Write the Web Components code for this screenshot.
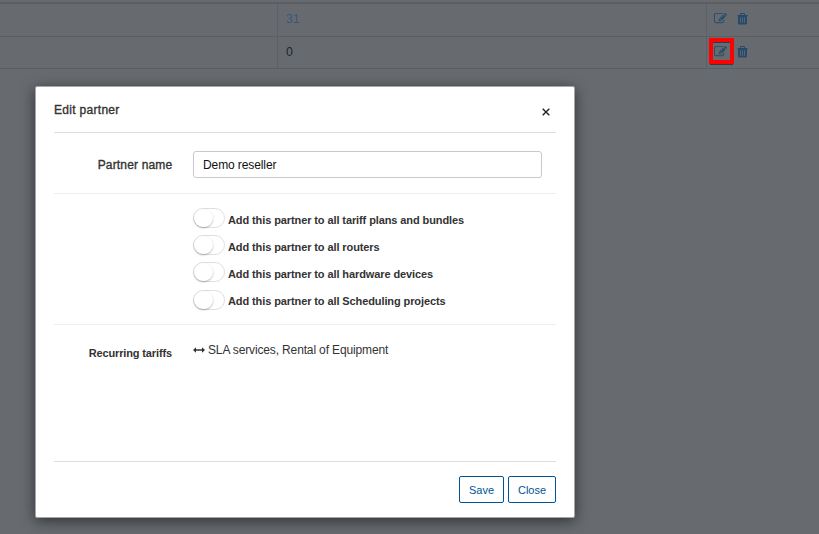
<!DOCTYPE html>
<html lang="en">
<head>
<meta charset="utf-8">
<title>Edit partner</title>
<style>
html,body{margin:0;height:100%;overflow:hidden}
body{font-family:"Liberation Sans",Arial,sans-serif;font-size:12px;color:#333}
</style>
</head>
<body>
<partners-page></partners-page>
<script>
const define = (name, html) => customElements.define(name, class extends HTMLElement {
  constructor() {
    super();
    const t = document.createElement('template');
    t.innerHTML = html;
    this.attachShadow({mode: 'open'}).append(t.content.cloneNode(true));
  }
});

define('icon-edit', `<style>:host{display:block;width:14px;height:14px}svg{display:block}</style>
<svg width="13" height="13" viewBox="0 0 1792 1792" fill="currentColor"><path d="M888 1184l116-116-152-152-116 116v56h96v96h56zm440-720q-16-16-33 1l-350 350q-17 17-1 33t33-1l350-350q17-17 1-33zm80 594v190q0 119-84.5 203.5t-203.5 84.5h-832q-119 0-203.5-84.5t-84.5-203.5v-832q0-119 84.5-203.5t203.5-84.5h832q63 0 117 25 15 7 18 23 3 17-9 29l-49 49q-14 14-32 8-23-6-45-6h-832q-66 0-113 47t-47 113v832q0 66 47 113t113 47h832q66 0 113-47t47-113v-126q0-13 9-22l64-64q15-15 35-7t20 29zm-96-738l288 288-672 672h-288v-288zm444 132l-92 92-288-288 92-92q28-28 68-28t68 28l152 152q28 28 28 68t-28 68z"/></svg>`);

define('icon-trash', `<style>:host{display:block;width:11px;height:12px}svg{display:block}</style>
<svg width="11" height="12" viewBox="0 0 11 12" fill="currentColor"><path fill-rule="evenodd" d="M3 2V1Q3 0 4 0H7Q8 0 8 1V2H10.6V3.2H10V10Q10 11.4 9 11.4H2Q1 11.4 1 10V3.2H.4V2ZM4 1V2H7V1ZM3 4.2V9.8H3.8V4.2ZM5.1 4.2V9.8H5.9V4.2ZM7.2 4.2V9.8H8V4.2Z"/></svg>`);

define('partner-row', `<style>
:host{display:grid;grid-template-columns:277px 429px 1fr;height:32px;border-bottom:1px solid #5b5f64;color:#264a69}
div{display:flex;align-items:center;box-sizing:border-box;padding-bottom:2px}
div+div{border-left:1px solid #5d6166}
.count{padding-left:8px;font-size:12.3px;color:#365878}
.actions{padding-left:7px;gap:9px}
</style><div></div><div class="count"><slot></slot></div><div class="actions"><slot name="edit"><icon-edit></icon-edit></slot><icon-trash></icon-trash></div>`);

define('click-marker', `<style>
:host{display:block;position:relative;width:14px;height:14px}
i{position:absolute;left:-5px;top:-7px;width:17px;height:18px;border:4px solid #f00;border-radius:1px}
i::before,i::after{content:"";position:absolute;left:0;width:17px;height:1px;background:#303d49}
i::before{top:0}i::after{left:-3px;width:23px;top:22px}
</style><icon-edit></icon-edit><i></i>`);

define('toggle-option', `<style>
:host{display:flex;gap:3px;height:27.2px;font-size:11px;font-weight:700;letter-spacing:-.1px}
.track{box-sizing:border-box;width:32px;height:20px;border:1px solid #dfdfdf;border-radius:10px;background:#fff}
.track::before{content:"";display:block;width:19px;height:18px;border-radius:10px;background:#fff;box-shadow:0 1px 2px rgba(0,0,0,.28)}
span{line-height:13px;margin-top:5.6px;white-space:nowrap}
</style><div class="track"></div><span><slot></slot></span>`);

define('outline-button', `<style>
:host{display:block}
button{box-sizing:border-box;height:27px;width:var(--w);padding:1px 0 0;border:1px solid #005596;border-radius:2px;background:#fff;color:#005596;font:11px "Liberation Sans",Arial,sans-serif}
</style><button><slot></slot></button>`);

define('form-row', `<style>
:host{display:grid;grid-template-columns:118px 1fr;column-gap:21px;box-sizing:border-box}
.label{text-align:right;font-weight:500;white-space:nowrap}
</style><div class="label"><slot name="label"></slot></div><div><slot></slot></div>`);

define('edit-dialog', `<style>
:host{display:flex;flex-direction:column;box-sizing:border-box;width:540px;height:432px;padding:0 18px;border:1px solid #a5a6a8;border-radius:2px;background:#fff;box-shadow:0 3px 14px rgba(0,0,0,.55);color:#333}
header{display:flex;justify-content:space-between;height:46px;box-sizing:border-box;border-bottom:1px solid #ddd;color:#333}
header b{font-weight:400;margin-top:16px;line-height:14px;letter-spacing:.3px;-webkit-text-stroke:.35px #333}
header svg{margin:21px 6px 0 0}
.name{height:61px;border-bottom:1px solid #eee;padding-top:18px}
.name [slot=label]{font-weight:400;line-height:29px;letter-spacing:.17px;margin-right:-.4px;-webkit-text-stroke:.35px #333}
input{display:block;box-sizing:border-box;width:349px;height:27px;border:1px solid #c9c9c9;border-radius:3px;padding:0 9px;font:12px "Liberation Sans",Arial,sans-serif;letter-spacing:-.1px;color:#111}
.options{height:131px;border-bottom:1px solid #eee;padding-top:14px}
.tariffs{height:137px;border-bottom:1px solid #ddd;padding-top:18px}
.tariffs [slot=label]{font-size:11px;font-weight:700;line-height:20px;letter-spacing:-.13px}
.list{display:flex;align-items:center;gap:3px;line-height:14px;letter-spacing:-.14px}
footer{display:flex;justify-content:flex-end;gap:4px;padding-top:14px}
</style>
<header><b>Edit partner</b><svg width="8" height="8" viewBox="0 0 8 8"><path d="M.7.7 7.3 7.3M7.3.7.7 7.3" stroke="#222" stroke-width="1.4"/></svg></header>
<form-row class="name"><span slot="label">Partner name</span><input value="Demo reseller"></form-row>
<form-row class="options"><div>
<toggle-option>Add this partner to all tariff plans and bundles</toggle-option>
<toggle-option>Add this partner to all routers</toggle-option>
<toggle-option>Add this partner to all hardware devices</toggle-option>
<toggle-option>Add this partner to all Scheduling projects</toggle-option></div></form-row>
<form-row class="tariffs"><span slot="label">Recurring tariffs</span><div class="list"><svg width="12" height="6" viewBox="0 0 12 6"><path d="M0 3 3 .3V2.2H9V.3L12 3 9 5.7V3.8H3V5.7Z" fill="#333"/></svg><span>SLA services, Rental of Equipment</span></div></form-row>
<footer><outline-button style="--w:45px">Save</outline-button><outline-button style="--w:48px">Close</outline-button></footer>`);

define('partners-page', `<style>
:host{display:block;position:relative;height:534px;overflow:hidden;background:#676b70}
.table{padding-top:2px}
.table::before{content:"";display:block;height:2px;background:#5b5f64}
.table partner-row:last-child{height:31px}
.zero{color:#22252a}
edit-dialog{position:absolute;left:35px;top:86px}
</style><div class="table"><partner-row>31</partner-row><partner-row><span class="zero">0</span><click-marker slot="edit"></click-marker></partner-row></div><edit-dialog></edit-dialog>`);
</script>
</body>
</html>
